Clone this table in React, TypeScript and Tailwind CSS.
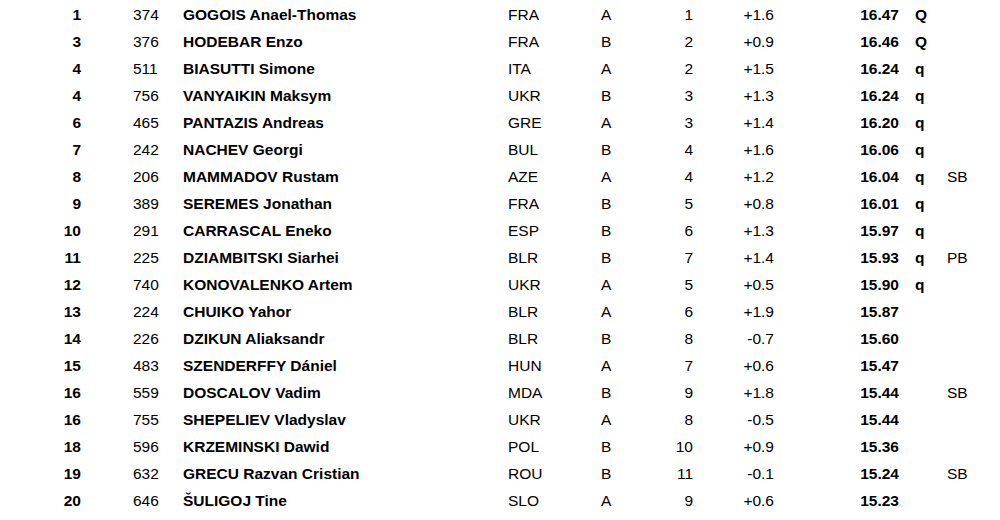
import React from "react";

type Row = {
  rank: string;
  bib: string;
  name: string;
  nat: string;
  group: string;
  pos: string;
  wind: string;
  mark: string;
  q?: string;
  note?: string;
};

const rows: Row[] = [
  { rank: "1", bib: "374", name: "GOGOIS Anael-Thomas", nat: "FRA", group: "A", pos: "1", wind: "+1.6", mark: "16.47", q: "Q" },
  { rank: "3", bib: "376", name: "HODEBAR Enzo", nat: "FRA", group: "B", pos: "2", wind: "+0.9", mark: "16.46", q: "Q" },
  { rank: "4", bib: "511", name: "BIASUTTI Simone", nat: "ITA", group: "A", pos: "2", wind: "+1.5", mark: "16.24", q: "q" },
  { rank: "4", bib: "756", name: "VANYAIKIN Maksym", nat: "UKR", group: "B", pos: "3", wind: "+1.3", mark: "16.24", q: "q" },
  { rank: "6", bib: "465", name: "PANTAZIS Andreas", nat: "GRE", group: "A", pos: "3", wind: "+1.4", mark: "16.20", q: "q" },
  { rank: "7", bib: "242", name: "NACHEV Georgi", nat: "BUL", group: "B", pos: "4", wind: "+1.6", mark: "16.06", q: "q" },
  { rank: "8", bib: "206", name: "MAMMADOV Rustam", nat: "AZE", group: "A", pos: "4", wind: "+1.2", mark: "16.04", q: "q", note: "SB" },
  { rank: "9", bib: "389", name: "SEREMES Jonathan", nat: "FRA", group: "B", pos: "5", wind: "+0.8", mark: "16.01", q: "q" },
  { rank: "10", bib: "291", name: "CARRASCAL Eneko", nat: "ESP", group: "B", pos: "6", wind: "+1.3", mark: "15.97", q: "q" },
  { rank: "11", bib: "225", name: "DZIAMBITSKI Siarhei", nat: "BLR", group: "B", pos: "7", wind: "+1.4", mark: "15.93", q: "q", note: "PB" },
  { rank: "12", bib: "740", name: "KONOVALENKO Artem", nat: "UKR", group: "A", pos: "5", wind: "+0.5", mark: "15.90", q: "q" },
  { rank: "13", bib: "224", name: "CHUIKO Yahor", nat: "BLR", group: "A", pos: "6", wind: "+1.9", mark: "15.87" },
  { rank: "14", bib: "226", name: "DZIKUN Aliaksandr", nat: "BLR", group: "B", pos: "8", wind: "-0.7", mark: "15.60" },
  { rank: "15", bib: "483", name: "SZENDERFFY Dániel", nat: "HUN", group: "A", pos: "7", wind: "+0.6", mark: "15.47" },
  { rank: "16", bib: "559", name: "DOSCALOV Vadim", nat: "MDA", group: "B", pos: "9", wind: "+1.8", mark: "15.44", note: "SB" },
  { rank: "16", bib: "755", name: "SHEPELIEV Vladyslav", nat: "UKR", group: "A", pos: "8", wind: "-0.5", mark: "15.44" },
  { rank: "18", bib: "596", name: "KRZEMINSKI Dawid", nat: "POL", group: "B", pos: "10", wind: "+0.9", mark: "15.36" },
  { rank: "19", bib: "632", name: "GRECU Razvan Cristian", nat: "ROU", group: "B", pos: "11", wind: "-0.1", mark: "15.24", note: "SB" },
  { rank: "20", bib: "646", name: "ŠULIGOJ Tine", nat: "SLO", group: "A", pos: "9", wind: "+0.6", mark: "15.23" },
];

export default function App() {
  return (
    <div className="w-[1000px] h-[520px] pt-px bg-white text-black text-[15.5px] font-['Liberation_Sans',Arial,sans-serif] overflow-hidden">
      {rows.map((r, i) => (
        <div key={i} className="flex h-[27px] items-center whitespace-nowrap">
          <div className="w-[81px] text-right font-bold">{r.rank}</div>
          <div className="w-[50px] ml-[52px]">{r.bib}</div>
          <div className="w-[325px] font-bold">{r.name}</div>
          <div className="w-[93px]">{r.nat}</div>
          <div className="w-[50px]">{r.group}</div>
          <div className="w-[42px] text-right">{r.pos}</div>
          <div className="w-[81px] text-right">{r.wind}</div>
          <div className="w-[125px] text-right font-bold">{r.mark}</div>
          <div className="w-[32px] ml-[16px] font-bold">{r.q}</div>
          <div className="w-[40px]">{r.note}</div>
        </div>
      ))}
    </div>
  );
}
